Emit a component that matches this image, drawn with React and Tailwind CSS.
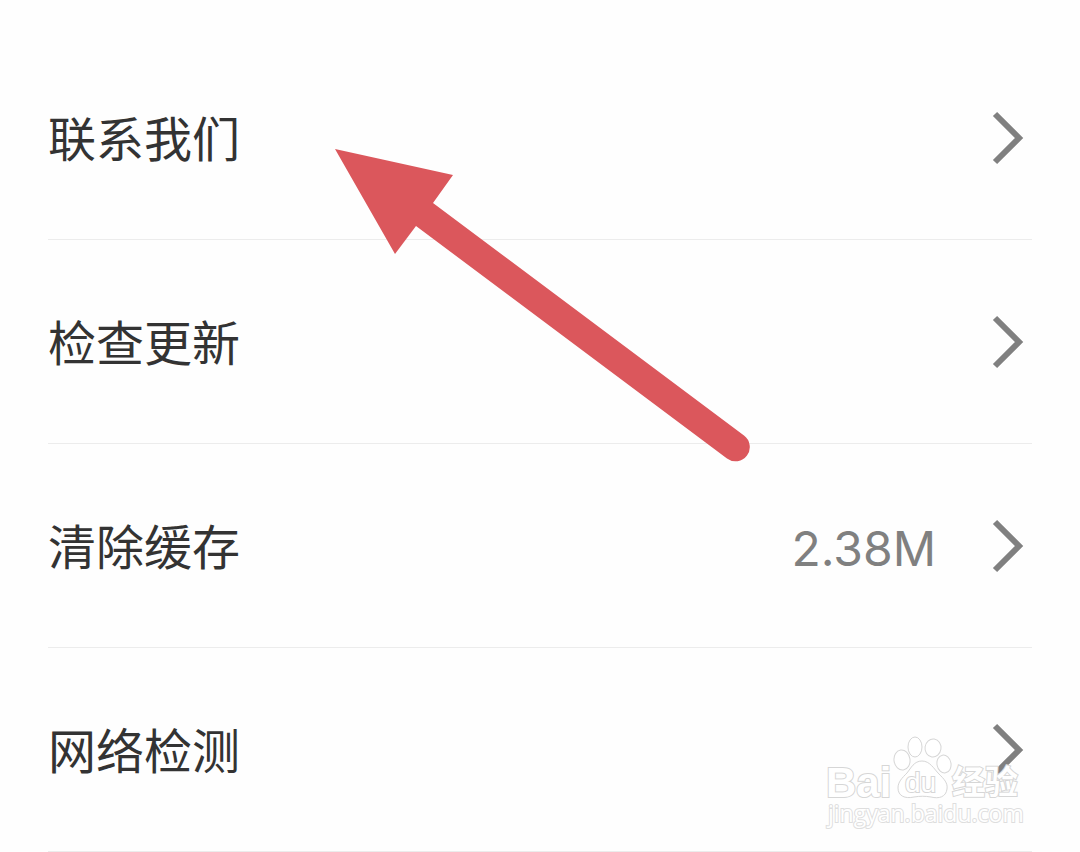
const items = [
  { id: "contact", label: "联系我们" },
  { id: "update", label: "检查更新" },
  { id: "cache", label: "清除缓存", value: "2.38M" },
  { id: "network", label: "网络检测" },
];

const Chevron = () => (
  <svg viewBox="0 0 32 54" className="w-8 h-[54px] shrink-0" fill="none" stroke="#808080" strokeWidth="6" aria-hidden="true">
    <path d="M3 3 L27 27 L3 51" />
  </svg>
);

const Arrow = () => (
  <svg
    viewBox="0 0 420 316"
    className="absolute left-[333px] top-[147px] w-[420px] h-[316px] pointer-events-none"
    fill="#db575c"
    aria-hidden="true"
  >
    <path d="M2 2 L120 28 L100 56 L411 288.5 A14.3 14.3 0 0 1 394 311.5 L83 79 L62 107 Z" />
  </svg>
);

const Watermark = () => (
  <svg
    viewBox="0 0 204 100"
    className="absolute right-[51px] bottom-[18px] w-[204px] h-[100px] pointer-events-none"
    fill="#fff"
    stroke="#d6d6d6"
    strokeWidth="1"
  >
    <text x="1" y="63" fontSize="42" fontWeight="bold" fontFamily="'Liberation Sans', Arial, sans-serif" strokeWidth="2" paintOrder="stroke">
      Bai
    </text>
    {/* Paw */}
    <ellipse cx="90" cy="13" rx="7" ry="10" />
    <ellipse cx="108" cy="14" rx="8" ry="9" transform="rotate(8 108 14)" />
    <ellipse cx="77" cy="26" rx="8" ry="10" transform="rotate(-8 77 26)" />
    <ellipse cx="119" cy="30" rx="7" ry="9" transform="rotate(-10 119 30)" />
    <path d="M97 27 C105 27 109 35 114 40 C119 45 123 49 122 55 C121 63 114 65 106 63 C100 62 95 62 89 63 C80 65 73 62 73 54 C73 48 77 44 82 39 C86 34 89 27 97 27 Z" />
    <text x="80" y="58" fontSize="28" fontFamily="'Liberation Sans', Arial, sans-serif" strokeWidth="2" paintOrder="stroke">
      du
    </text>
    <text x="127" y="60" fontSize="33" fontWeight="bold" fontFamily="'Noto Sans CJK SC', sans-serif" strokeWidth="2" paintOrder="stroke">
      经验
    </text>
    <text x="3" y="88" fontSize="23" fontFamily="'Open Sans', sans-serif" stroke="#dedede" strokeWidth="2" paintOrder="stroke">
      jingyan.baidu.com
    </text>
  </svg>
);

export default function App() {
  return (
    <main className="relative min-h-screen bg-[#fefefe] px-12 pt-9 font-['Inter','Noto_Sans_CJK_SC',sans-serif]">
      <ul>
        {items.map((item) => (
          <li key={item.id} className="border-b border-[#ececec]">
            <button type="button" className="flex w-full h-[203px] items-center pr-2 text-left text-5xl">
              <span className="flex-1 pt-1 text-[#333]">{item.label}</span>
              {item.value && <span className="mr-14 pt-1.5 text-[#808080]">{item.value}</span>}
              <Chevron />
            </button>
          </li>
        ))}
      </ul>
      <Arrow />
      <Watermark />
    </main>
  );
}
